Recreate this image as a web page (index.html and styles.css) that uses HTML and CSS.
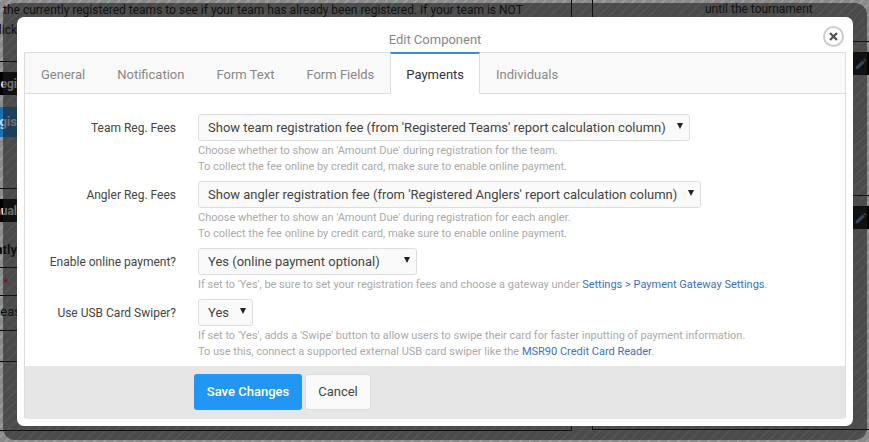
FILE: index.html
```html
<!DOCTYPE html>
<html lang="en">
<head>
<meta charset="utf-8">
<title>Edit Component</title>
<link rel="stylesheet" href="styles.css">
</head>
<body>
<div class="page">
  <div class="page-left">
    <p class="intro">the currently registered teams to see if your team has already been registered. If your team is NOT<br><span class="tail">click</span></p>
    <hr class="rule rule-a">
    <div class="bar"><span class="tail">Regi</span></div>
    <div class="bg-btn"><span class="tail">Regis</span></div>
    <hr class="rule rule-b">
    <div class="bar bar-2"><span class="tail">Manual</span></div>
    <div class="heading"><span class="tail">Currently</span></div>
    <hr class="rule rule-c">
    <div class="star">*</div>
    <hr class="rule rule-d">
    <div class="please"><span class="please-text">Please</span></div>
    <hr class="rule rule-e">
    <hr class="rule rule-f">
  </div>
  <div class="page-right">
    <div class="until">until the tournament</div>
    <hr class="rule rule-g">
    <div class="bar bar-r"><svg class="pencil" viewBox="0 0 16 16"><path d="M1 12 10 3l3 3-9 9H1z" fill="#4a7fae"/><path d="M11 2l1.500-1.500 3 3L14 5z" fill="#a05060"/></svg></div>
    <hr class="rule rule-h">
    <div class="bar bar-r bar-r2"><svg class="pencil" viewBox="0 0 16 16"><path d="M1 12 10 3l3 3-9 9H1z" fill="#4a7fae"/><path d="M11 2l1.500-1.500 3 3L14 5z" fill="#a05060"/></svg></div>
  </div>
</div>
<div class="overlay"></div>
<div class="modal">
  <header class="modal-title">Edit Component</header>
  <button class="close" type="button" aria-label="Close"><svg viewBox="0 0 12 12"><path d="M2.200 2.200 9.800 9.800M9.800 2.200 2.200 9.800" stroke="#555" stroke-width="2.600" fill="none"/></svg></button>
  <div class="panel">
    <nav class="tabs">
      <a class="tab">General</a>
      <a class="tab">Notification</a>
      <a class="tab">Form Text</a>
      <a class="tab">Form Fields</a>
      <a class="tab active">Payments</a>
      <a class="tab">Individuals</a>
      <span class="tab-rest"></span>
    </nav>
    <form class="form">
      <div class="row">
        <label class="label">Team Reg. Fees</label>
        <div class="field">
          <span class="select-wrap"><select class="select"><option>Show team registration fee (from 'Registered Teams' report calculation column)</option></select></span>
          <p class="hint">Choose whether to show an 'Amount Due' during registration for the team.<br>To collect the fee online by credit card, make sure to enable online payment.</p>
        </div>
      </div>
      <div class="row">
        <label class="label">Angler Reg. Fees</label>
        <div class="field">
          <span class="select-wrap"><select class="select select-wide"><option>Show angler registration fee (from 'Registered Anglers' report calculation column)</option></select></span>
          <p class="hint">Choose whether to show an 'Amount Due' during registration for each angler.<br>To collect the fee online by credit card, make sure to enable online payment.</p>
        </div>
      </div>
      <div class="row">
        <label class="label">Enable online payment?</label>
        <div class="field">
          <span class="select-wrap"><select class="select select-mid"><option>Yes (online payment optional)</option></select></span>
          <p class="hint">If set to 'Yes', be sure to set your registration fees and choose a gateway under <a class="link">Settings &gt; Payment Gateway Settings</a>.</p>
        </div>
      </div>
      <div class="row">
        <label class="label">Use USB Card Swiper?</label>
        <div class="field">
          <span class="select-wrap"><select class="select"><option>Yes</option></select></span>
          <p class="hint">If set to 'Yes', adds a 'Swipe' button to allow users to swipe their card for faster inputting of payment information.<br>To use this, connect a supported external USB card swiper like the <a class="link">MSR90 Credit Card Reader</a>.</p>
        </div>
      </div>
    </form>
    <footer class="footer">
      <button class="btn btn-primary" type="button">Save Changes</button>
      <button class="btn btn-default" type="button">Cancel</button>
    </footer>
  </div>
</div>
</body>
</html>
```

FILE: styles.css
```css
* { box-sizing: border-box; }
html, body { margin: 0; height: 100%; }
body {
  width: 869px;
  height: 442px;
  overflow: hidden;
  position: relative;
  font-family: Roboto, "Liberation Sans", sans-serif;
  background: #8a8a8a repeating-linear-gradient(135deg, rgba(255,255,255,.14) 0 2px, rgba(0,0,0,0) 2px 7px);
}

/* Page behind the dialog */
.page {
  display: flex;
  height: 442px;
  color: #000;
  font-family: Roboto, "Liberation Sans", sans-serif;
  font-size: 12px;
}
.page-left {
  width: 572px;
  border-right: 1px solid #000;
  height: 431px;
  border-bottom: 1px solid #000;
  overflow: hidden;
  white-space: nowrap;
}
.page-right {
  margin-left: 20px;
  flex: 1;
  border-left: 1px solid #000;
  height: 430px;
  border-bottom: 1px solid #000;
  overflow: hidden;
}
.intro { margin: 0; padding: 0 0 0 3px; line-height: 20px; height: 51px; font-size: 12px; }
.intro .tail { margin-left: -3px; }
.tail {
  display: flex;
  justify-content: flex-end;
  width: 17px;
  white-space: nowrap;
}
.rule { border: 0; border-top: 1px solid #000; margin: 0; }
.rule-a { margin-top: 10px; }
.bar {
  background: #000;
  color: #ddd;
  font-weight: 700;
  height: 23px;
  line-height: 24px;
  font-size: 12px;
  margin-top: 10px;
}
.bg-btn {
  background: #1b6fb5;
  color: #ddd;
  font-weight: 700;
  width: 60px;
  height: 30px;
  line-height: 30px;
  margin-top: 12px;
  font-size: 13px;
}
.rule-b { margin-top: 51px; }
.bar-2 { margin-top: 10px; }
.heading { font-weight: 700; font-size: 13px; margin-top: 16px; height: 20px; line-height: 24px; }
.rule-c { margin-top: 9px; }
.star { color: #c0152a; height: 27px; line-height: 31px; padding-left: 3px; }
.rule-d { margin: 0; }
.please { height: 34px; line-height: 32px; font-size: 13px; }
.please-text { display: block; margin-left: -11px; }
.rule-e { margin: 0; }
.rule-f { margin-top: 30px; }
.until { padding-left: 112px; line-height: 19px; height: 41px; }
.rule-g { margin: 0; }
.bar-r { margin-top: 10px; display: flex; justify-content: flex-end; align-items: center; padding-right: 2px; }
.rule-h { margin-top: 120px; }
.bar-r2 { margin-top: 10px; }
.pencil { width: 12px; height: 12px; }

/* Dim layer: dark rounded sheet over the page */
.overlay {
  position: absolute;
  left: 3px;
  top: 3px;
  width: 864px;
  height: 437px;
  border-radius: 12px;
  background: rgba(30,30,30,.58);
}

/* Dialog */
.modal {
  position: absolute;
  left: 17px;
  top: 17px;
  width: 836px;
  height: 409px;
  background: #fff;
  border-radius: 7px;
  padding: 0 7px 7px;
  display: flex;
  flex-direction: column;
}
.modal-title {
  height: 35px;
  flex: none;
  text-align: center;
  font-size: 13px;
  line-height: 46px;
  color: #888;
}
.close {
  position: absolute;
  right: 9px;
  top: 9px;
  width: 21px;
  height: 21px;
  padding: 0;
  border-radius: 50%;
  border: 2px solid #ccc;
  background: #fff;
  display: flex;
  align-items: center;
  justify-content: center;
}
.close svg { width: 11px; height: 11px; }
.panel {
  flex: 1;
  display: flex;
  flex-direction: column;
  border: 1px solid #ddd;
  border-bottom: 0;
  border-radius: 2px;
  min-height: 0;
}
.tabs {
  display: flex;
  flex: none;
  height: 42px;
  background: #f9f9f9;
  margin-top: -1px;
}
.tab {
  padding: 0 16px;
  line-height: 43px;
  font-size: 13px;
  color: #888;
  border-top: 1px solid #ddd;
  border-bottom: 1px solid #ddd;
}
.tab.active {
  color: #333;
  background: #fff;
  padding: 0 15px;
  border-top: 2px solid #3a8cd0;
  border-bottom-color: #fff;
  border-left: 1px solid #ddd;
  border-right: 1px solid #ddd;
  line-height: 41px;
}
.tab-rest { flex: 1; border-top: 1px solid #ddd; border-bottom: 1px solid #ddd; }
.form { flex: 1; padding-top: 20px; min-height: 0; }
.row { display: grid; grid-template-columns: 151px 1fr; column-gap: 22px; }
.row + .row { margin-top: 6px; }
.label {
  text-align: right;
  font-size: 12px;
  color: #444;
  line-height: 27px;
  padding-top: 1px;
}
.field { min-width: 0; }
.select-wrap { display: inline-block; position: relative; height: 27px; vertical-align: top; }
.select-wrap::after {
  content: "";
  position: absolute;
  right: 7px;
  top: 9px;
  border-left: 3px solid transparent;
  border-right: 3px solid transparent;
  border-top: 6px solid #222;
}
.select {
  appearance: none;
  -webkit-appearance: none;
  height: 27px;
  border: 1px solid #ddd;
  border-radius: 3px;
  background: #fafafa;
  font-family: inherit;
  font-size: 13px;
  color: #444;
  padding: 0 23px 0 9px;
  display: block;
}
.select-mid { width: 219px; }
.select-wide { width: 503px; }
.hint {
  margin: 0;
  padding-top: 2px;
  font-size: 11px;
  line-height: 16px;
  color: #aaa;
}
.link { color: #3a72c0; }
.footer {
  flex: none;
  height: 53px;
  background: #e6e6e6;
  display: flex;
  align-items: center;
  gap: 3px;
  padding: 0 0 2px 169px;
  border-radius: 0 0 3px 3px;
}
.btn {
  height: 36px;
  font-family: inherit;
  font-size: 13px;
  border-radius: 3px;
  padding: 0;
}
.btn-primary { width: 108px; background: #2196f3; color: #fff; border: 0; font-weight: 500; }
.btn-default { width: 66px; background: #fafafa; color: #444; border: 1px solid #ddd; }
```
